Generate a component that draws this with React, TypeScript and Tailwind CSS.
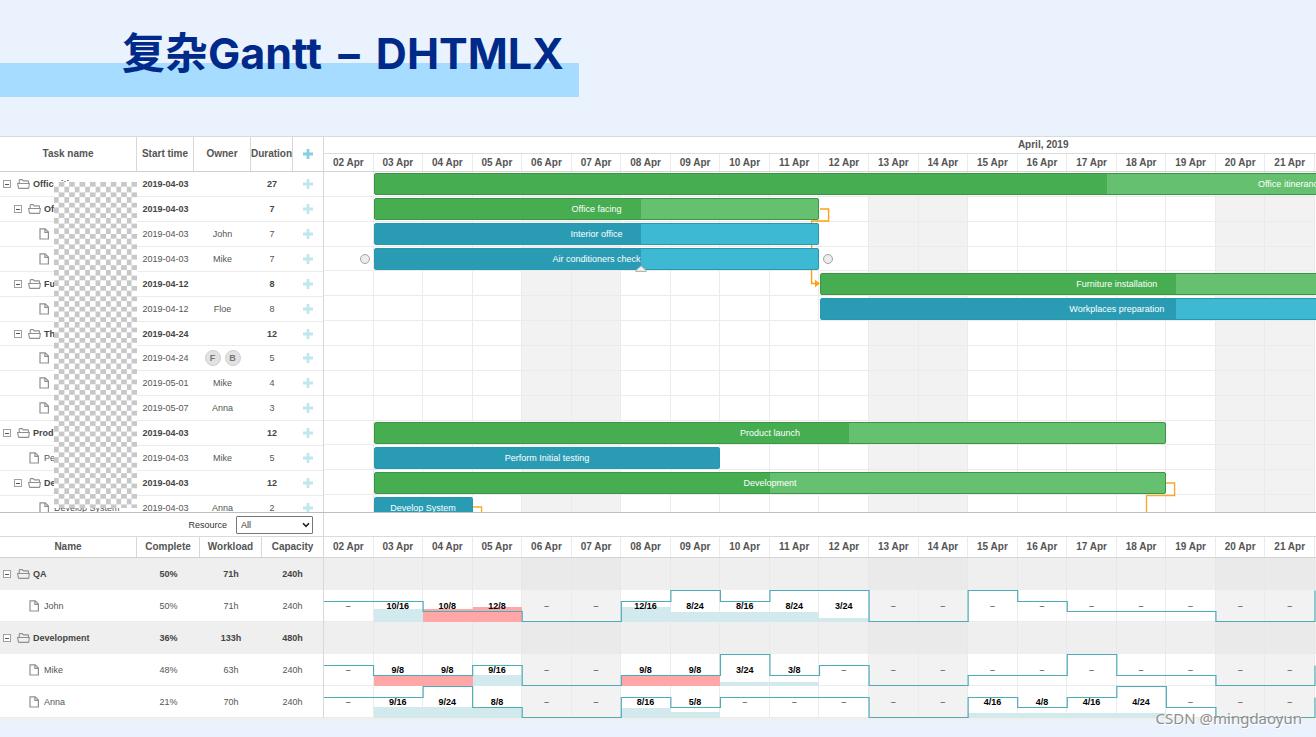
import { useState } from 'react';
import clsx from 'clsx';

type Task = {
  name: string;
  level: number;
  date: string;
  owners?: string[];
  duration: number;
  project?: boolean;
  // bar position in days from 02 Apr
  bar?: { start: number; days: number; progress: number; selected?: boolean };
};

type Resource = {
  name: string;
  complete: string;
  workload: string;
  capacity: string;
  // hours available per day, the last one is the day after the visible range
  hours?: number[];
  load?: number[];
};

const DAYS = Array.from({ length: 20 }, (_, i) => ({
  label: `${String(i + 2).padStart(2, '0')} Apr`,
  weekend: i % 7 === 4 || i % 7 === 5,
}));

const tasks: Task[] = [
  { name: 'Office itinerancy', level: 0, date: '2019-04-03', duration: 27, project: true, bar: { start: 1, days: 37, progress: 40 } },
  { name: 'Office facing', level: 1, date: '2019-04-03', duration: 7, project: true, bar: { start: 1, days: 9, progress: 60 } },
  { name: 'Interior office', level: 2, date: '2019-04-03', owners: ['John'], duration: 7, bar: { start: 1, days: 9, progress: 60 } },
  { name: 'Air conditioners check', level: 2, date: '2019-04-03', owners: ['Mike'], duration: 7, bar: { start: 1, days: 9, progress: 60, selected: true } },
  { name: 'Furniture installation', level: 1, date: '2019-04-12', duration: 8, project: true, bar: { start: 10, days: 12, progress: 60 } },
  { name: 'Workplaces preparation', level: 2, date: '2019-04-12', owners: ['Floe'], duration: 8, bar: { start: 10, days: 12, progress: 60 } },
  { name: 'Th', level: 1, date: '2019-04-24', duration: 12, project: true },
  { name: '', level: 2, date: '2019-04-24', owners: ['F', 'B'], duration: 5 },
  { name: '', level: 2, date: '2019-05-01', owners: ['Mike'], duration: 4 },
  { name: '', level: 2, date: '2019-05-07', owners: ['Anna'], duration: 3 },
  { name: 'Product launch', level: 0, date: '2019-04-03', duration: 12, project: true, bar: { start: 1, days: 16, progress: 60 } },
  { name: 'Perform Initial testing', level: 1, date: '2019-04-03', owners: ['Mike'], duration: 5, bar: { start: 1, days: 7, progress: 100 } },
  { name: 'Development', level: 1, date: '2019-04-03', duration: 12, project: true, bar: { start: 1, days: 16, progress: 50 } },
  { name: 'Develop System', level: 2, date: '2019-04-03', owners: ['Anna'], duration: 2, bar: { start: 1, days: 2, progress: 100 } },
];

const resources: Resource[] = [
  { name: 'QA', complete: '50%', workload: '71h', capacity: '240h' },
  {
    name: 'John', complete: '50%', workload: '71h', capacity: '240h',
    hours: [16, 16, 8, 8, 0, 0, 16, 24, 16, 24, 24, 0, 0, 24, 16, 8, 8, 8, 0, 0, 24],
    load: [0, 10, 10, 12, 0, 0, 12, 8, 8, 8, 3, 0, 0, 0, 0, 0, 0, 0, 0, 0],
  },
  { name: 'Development', complete: '36%', workload: '133h', capacity: '480h' },
  {
    name: 'Mike', complete: '48%', workload: '63h', capacity: '240h',
    hours: [16, 8, 8, 16, 0, 0, 8, 8, 24, 8, 16, 0, 0, 8, 8, 24, 8, 8, 0, 0, 16],
    load: [0, 9, 9, 9, 0, 0, 9, 9, 3, 3, 0, 0, 0, 0, 0, 0, 0, 0, 0, 0],
  },
  {
    name: 'Anna', complete: '21%', workload: '70h', capacity: '240h',
    hours: [16, 16, 24, 8, 0, 0, 16, 8, 16, 16, 16, 0, 0, 16, 8, 16, 24, 8, 0, 0, 16],
    load: [0, 9, 9, 8, 0, 0, 8, 5, 0, 0, 0, 0, 0, 4, 4, 4, 4, 0, 0, 0],
  },
];

const TASK_COLS = 'grid grid-cols-[137px_57px_57px_42px_30px]';
const RESOURCE_COLS = 'grid grid-cols-[137px_63px_62px_61px]';
const INDENT = ['pl-[3px]', 'pl-[14px]', 'pl-6'];

const dayPercent = (days: number) => `${days * 5}%`;

const FolderIcon = () => (
  <svg viewBox="0 0 13 10" className="h-[10px] w-[13px] shrink-0" fill="none" stroke="#8f8f8f" strokeWidth="1.1">
    <path d="M2.2 4.3V1.3Q2.2 .6 2.9 .6H5.2L6.4 1.9H10.8Q11.5 1.9 11.5 2.6V4.3" />
    <path d="M.6 4.5H12.3L11.8 8.7Q11.7 9.4 11 9.4H2.2Q1.5 9.4 1.4 8.7Z" />
  </svg>
);

const FileIcon = () => (
  <svg viewBox="0 0 12 12" className="h-3 w-3 shrink-0" fill="none" stroke="#8f8f8f" strokeWidth="1.2">
    <path d="M2 .9H7.2L10.4 4.1V11H2Z" />
    <path d="M6.9 .9V4.4H10.4" />
  </svg>
);

const PlusIcon = () => (
  <svg viewBox="0 0 10 10" className="h-[10px] w-[10px]" fill="currentColor">
    <path d="M3.6 0H6.4V3.6H10V6.4H6.4V10H3.6V6.4H0V3.6H3.6Z" />
  </svg>
);

const TreeCell = ({ name, level, folder }: { name: string; level: number; folder?: boolean }) => (
  <td className={clsx('flex items-center overflow-hidden whitespace-nowrap', INDENT[level])}>
    {folder ? (
      <button aria-label="Collapse" className="flex h-2 w-2 shrink-0 items-center justify-center border border-[#a0a0a0] bg-white">
        <span className="h-px w-1 bg-[#555]" />
      </button>
    ) : (
      <span className="w-2 shrink-0" />
    )}
    <span className="mr-1 ml-[6px] flex w-3 shrink-0 items-center justify-center">{folder ? <FolderIcon /> : <FileIcon />}</span>
    {name}
  </td>
);

const DayHeader = ({ className }: { className: string }) => (
  <div className={clsx('grid grid-cols-20 border-b border-[#d4d4d4] pr-px text-[10px] leading-4 font-bold text-[#555]', className)}>
    {DAYS.map((d) => (
      <div key={d.label} className="flex items-center justify-center border-r border-[#ebebeb] whitespace-nowrap">
        {d.label}
      </div>
    ))}
  </div>
);

const TaskBar = ({ task }: { task: Task }) => {
  if (!task.bar) return <div />;
  const { start, days, progress, selected } = task.bar;
  return (
    <div className="flex items-center">
      <div
        className={clsx(
          'relative grid h-[22px] shrink-0 grid-cols-1 rounded-[2px] border',
          task.project ? 'border-[#3c9445] bg-[#65c16f]' : 'border-[#2898b0] bg-[#3db9d3]'
        )}
        style={{ marginLeft: dayPercent(start), width: dayPercent(days) }}
      >
        <div
          className={clsx('[grid-area:1/1]', task.project ? 'bg-[#46ad51]' : 'bg-[#299cb4]')}
          style={{ width: `${progress}%` }}
        />
        <span className="flex items-center justify-center text-[9px] leading-4 whitespace-nowrap text-white [grid-area:1/1]">{task.name}</span>
        {selected && (
          <>
            <span className="absolute top-[5px] -left-[15px] h-[10px] w-[10px] rounded-full border border-[#a3a3a3] bg-[#ececec]" />
            <span className="absolute top-[5px] -right-[15px] h-[10px] w-[10px] rounded-full border border-[#a3a3a3] bg-[#ececec]" />
            <svg
              viewBox="0 0 12 7"
              className="absolute -bottom-[3px] h-[7px] w-3 -translate-x-1/2"
              style={{ left: `${progress}%` }}
            >
              <path d="M.8 6.4V5.4L6 .8L11.2 5.4V6.4Z" fill="#f0f0f0" stroke="#a3a3a3" strokeWidth=".9" />
            </svg>
          </>
        )}
      </div>
    </div>
  );
};

const Links = () => (
  <div className="absolute inset-0 mr-px">
    <svg className="absolute top-[37px] h-px w-px overflow-visible" style={{ left: dayPercent(10) }} fill="none" stroke="#ffa011" strokeWidth="1.4">
      <path d="M0 0H8.6V12H-8.4V74.5H-4" />
      <path d="M-5 70.8L0 74.5L-5 78.2Z" fill="#ffa011" stroke="none" />
    </svg>
    <svg className="absolute top-[311px] h-px w-px overflow-visible" style={{ left: dayPercent(17) }} fill="none" stroke="#f2ab34" strokeWidth="1.4">
      <path d="M0 0H8.6V12.5H-19.5V40" />
    </svg>
    <svg className="absolute top-[335px] h-px w-px overflow-visible" style={{ left: dayPercent(3) }} fill="none" stroke="#f2ab34" strokeWidth="1.4">
      <path d="M0 0H8.6V14" />
    </svg>
  </div>
);

const levelY = (hours: number) => (hours === 24 ? 0.5 : hours === 16 ? 11.5 : hours === 8 ? 21.5 : 31.5);

const LoadRow = ({ resource }: { resource: Resource }) => {
  const { hours, load } = resource;
  if (!hours || !load) {
    return (
      <div className="grid h-8 grid-cols-20 bg-[#efefef] pr-px">
        {DAYS.map((d) => (
          <div key={d.label} className={clsx('border-r border-[#e8e8e8]', d.weekend && 'bg-[#eaeaea]')} />
        ))}
      </div>
    );
  }
  const line = hours.map((h, i) => (i === 0 ? `M0 ${levelY(h)}H1` : i === 20 ? `V${levelY(h)}` : `V${levelY(h)}H${i + 1}`)).join('');
  return (
    <div className="relative h-8 pr-px">
      <div className="grid h-full grid-cols-20">
        {DAYS.map((d, i) => (
          <div
            key={d.label}
            className={clsx('grid grid-cols-1 border-r border-b border-[#ebebeb] text-[9px] leading-4 font-bold', d.weekend && 'bg-[#f2f2f2]')}
          >
            {load[i] > 0 && (
              <div
                className={clsx('-mr-px -mb-px self-end [grid-area:1/1]', load[i] > hours[i] ? 'bg-[#ffa6a6]' : 'bg-[#d2e9ed]')}
                style={{ height: Math.round(load[i] * 1.25) }}
              />
            )}
            <span className={clsx('flex items-center justify-center pt-px [grid-area:1/1]', load[i] > 0 ? 'text-black' : 'text-[#777]')}>
              {load[i] > 0 ? `${load[i]}/${hours[i]}` : '–'}
            </span>
          </div>
        ))}
      </div>
      <div className="absolute inset-0 mr-px">
        <svg viewBox="0 0 20 32" preserveAspectRatio="none" className="h-full w-full overflow-visible" fill="none" stroke="#4fabb8">
          <path d={line} strokeWidth="1.2" vectorEffect="non-scaling-stroke" />
        </svg>
      </div>
    </div>
  );
};

const Owners = ({ owners = [] }: { owners?: string[] }) => {
  if (owners.length < 2) return <>{owners[0]}</>;
  return (
    <>
      {owners.map((o) => (
        <span key={o} className="flex h-4 w-4 items-center justify-center rounded-full border border-[#d0d0d0] bg-[#e2e2e2] font-bold text-[#777]">
          {o}
        </span>
      ))}
    </>
  );
};

// Transparency pattern that hides the task names
const Checker = () => (
  <svg className="pointer-events-none absolute top-[45px] left-[54px] h-[326px] w-[83px]" shapeRendering="crispEdges">
    <defs>
      <pattern id="checker" width="10.4" height="10.4" patternUnits="userSpaceOnUse">
        <rect width="10.4" height="10.4" fill="#fff" />
        <rect x="5.2" width="5.2" height="5.2" fill="#c8c8c8" />
        <rect y="5.2" width="5.2" height="5.2" fill="#c8c8c8" />
      </pattern>
    </defs>
    <rect width="100%" height="100%" fill="url(#checker)" />
  </svg>
);

export default function App() {
  const [resource, setResource] = useState('All');

  return (
    <div className="relative min-h-screen overflow-hidden bg-[#eaf2fe] font-['Liberation_Sans',Arial,sans-serif]">
      <header className="h-[136px]">
        <div className="relative w-fit pt-[22px] pr-[15px] pl-[122px]">
          <div className="absolute inset-x-0 top-[63px] h-[34px] bg-[#a5dcff]" />
          <h1 className="relative font-[Inter,'Noto_Sans_CJK_SC',sans-serif] text-[43px] leading-[62px] font-bold whitespace-nowrap text-[#002a8a]">
            复杂Gantt <span className="mx-[6px]">–</span> DHTMLX
          </h1>
        </div>
      </header>

      <main className="bg-white">
        <section className="flex border-t border-[#dadada]">
          <div className="relative w-[324px] shrink-0 border-r border-[#d8d8d8]">
            <table className="block text-[9px] leading-4 text-[#555]">
              <thead className="block">
                <tr className={clsx(TASK_COLS, 'h-[35px] border-b border-[#d0d0d0] text-[10px]')}>
                  {['Task name', 'Start time', 'Owner', 'Duration'].map((h) => (
                    <th key={h} className="flex items-center justify-center border-r border-[#d8d8d8] whitespace-nowrap">{h}</th>
                  ))}
                  <th className="flex items-center justify-center">
                    <button aria-label="Add task" className="text-[#84d2e0]"><PlusIcon /></button>
                  </th>
                </tr>
              </thead>
              <tbody className="block h-[340px] overflow-hidden">
                {tasks.map((t, i) => (
                  <tr
                    key={i}
                    className={clsx(
                      TASK_COLS,
                      'border-b border-[#ebebeb]',
                      i % 7 === 6 ? 'h-6' : 'h-[25px]',
                      t.project && 'font-bold text-[#454545]'
                    )}
                  >
                    <TreeCell name={t.name} level={t.level} folder={t.project} />
                    <td className="flex items-center justify-center">{t.date}</td>
                    <td className="flex items-center justify-center gap-1"><Owners owners={t.owners} /></td>
                    <td className="flex items-center justify-center">{t.duration}</td>
                    <td className="flex items-center justify-center">
                      <button aria-label="Add subtask" className="text-[#bfe7ee]"><PlusIcon /></button>
                    </td>
                  </tr>
                ))}
              </tbody>
            </table>
            <Checker />
          </div>

          <div className="min-w-0 flex-1 overflow-hidden">
            <div className="flex h-[17px] w-[145%] items-center justify-center border-b border-[#dcdcdc] text-[10px] leading-4 font-bold text-[#555]">
              April, 2019
            </div>
            <DayHeader className="h-[18px]" />
            <div className="h-[340px] overflow-hidden">
              <div className="relative grid h-[348px] auto-rows-fr pr-px">
                {tasks.map((_, i) => (
                  <div key={i} className="grid grid-cols-20">
                    {DAYS.map((d) => (
                      <div key={d.label} className={clsx('border-r border-b border-[#ebebeb]', d.weekend && 'bg-[#f2f2f2]')} />
                    ))}
                  </div>
                ))}
                <Links />
                <div className="absolute inset-0 mr-px grid auto-rows-fr">
                  {tasks.map((t, i) => (
                    <TaskBar key={i} task={t} />
                  ))}
                </div>
              </div>
            </div>
          </div>
        </section>

        <section className="border-t border-[#bdbdbd]">
          <div className="flex h-6 border-b border-[#dadada]">
            <div className="flex w-[324px] shrink-0 items-center justify-end border-r border-[#d8d8d8] pr-[10px] text-[9px] leading-4 text-[#333]">
              <label htmlFor="resource" className="mr-[9px]">Resource</label>
              <div className="relative">
                <select
                  id="resource"
                  value={resource}
                  onChange={(e) => setResource(e.target.value)}
                  className="block h-[18px] w-[77px] appearance-none rounded-[1px] border border-[#767676] bg-white pl-1 text-[9px] leading-4"
                >
                  <option>All</option>
                </select>
                <svg viewBox="0 0 8 6" className="pointer-events-none absolute top-[6px] right-[3px] h-[6px] w-2" fill="none" stroke="#222" strokeWidth="1.6">
                  <path d="M1 1.2L4 4.3L7 1.2" />
                </svg>
              </div>
            </div>
          </div>

          <div className="flex">
            <table className="block w-[324px] shrink-0 border-r border-[#d8d8d8] text-[9px] leading-4 text-[#555]">
              <thead className="block">
                <tr className={clsx(RESOURCE_COLS, 'h-[21px] border-b border-[#d0d0d0] text-[10px]')}>
                  {['Name', 'Complete', 'Workload', 'Capacity'].map((h) => (
                    <th key={h} className="flex items-center justify-center border-r border-[#d8d8d8] last:border-r-0">{h}</th>
                  ))}
                </tr>
              </thead>
              <tbody className="block">
                {resources.map((r) => (
                  <tr
                    key={r.name}
                    className={clsx(RESOURCE_COLS, 'h-8', r.hours ? 'border-b border-[#ebebeb]' : 'bg-[#efefef] font-bold text-[#454545]')}
                  >
                    <TreeCell name={r.name} level={r.hours ? 1 : 0} folder={!r.hours} />
                    <td className="flex items-center justify-center">{r.complete}</td>
                    <td className="flex items-center justify-center">{r.workload}</td>
                    <td className="flex items-center justify-center">{r.capacity}</td>
                  </tr>
                ))}
              </tbody>
            </table>

            <div className="min-w-0 flex-1 overflow-hidden">
              <DayHeader className="h-[21px]" />
              {resources.map((r) => (
                <LoadRow key={r.name} resource={r} />
              ))}
            </div>
          </div>
          <div className="h-[3px] bg-[#efefef]" />
        </section>
      </main>

      <p className="absolute right-[14px] bottom-[7px] font-['Noto_Sans',sans-serif] text-[15px] leading-6 text-[#8f8f8f] [text-shadow:1px_1px_0_#fff]">
        CSDN @mingdaoyun
      </p>
    </div>
  );
}
